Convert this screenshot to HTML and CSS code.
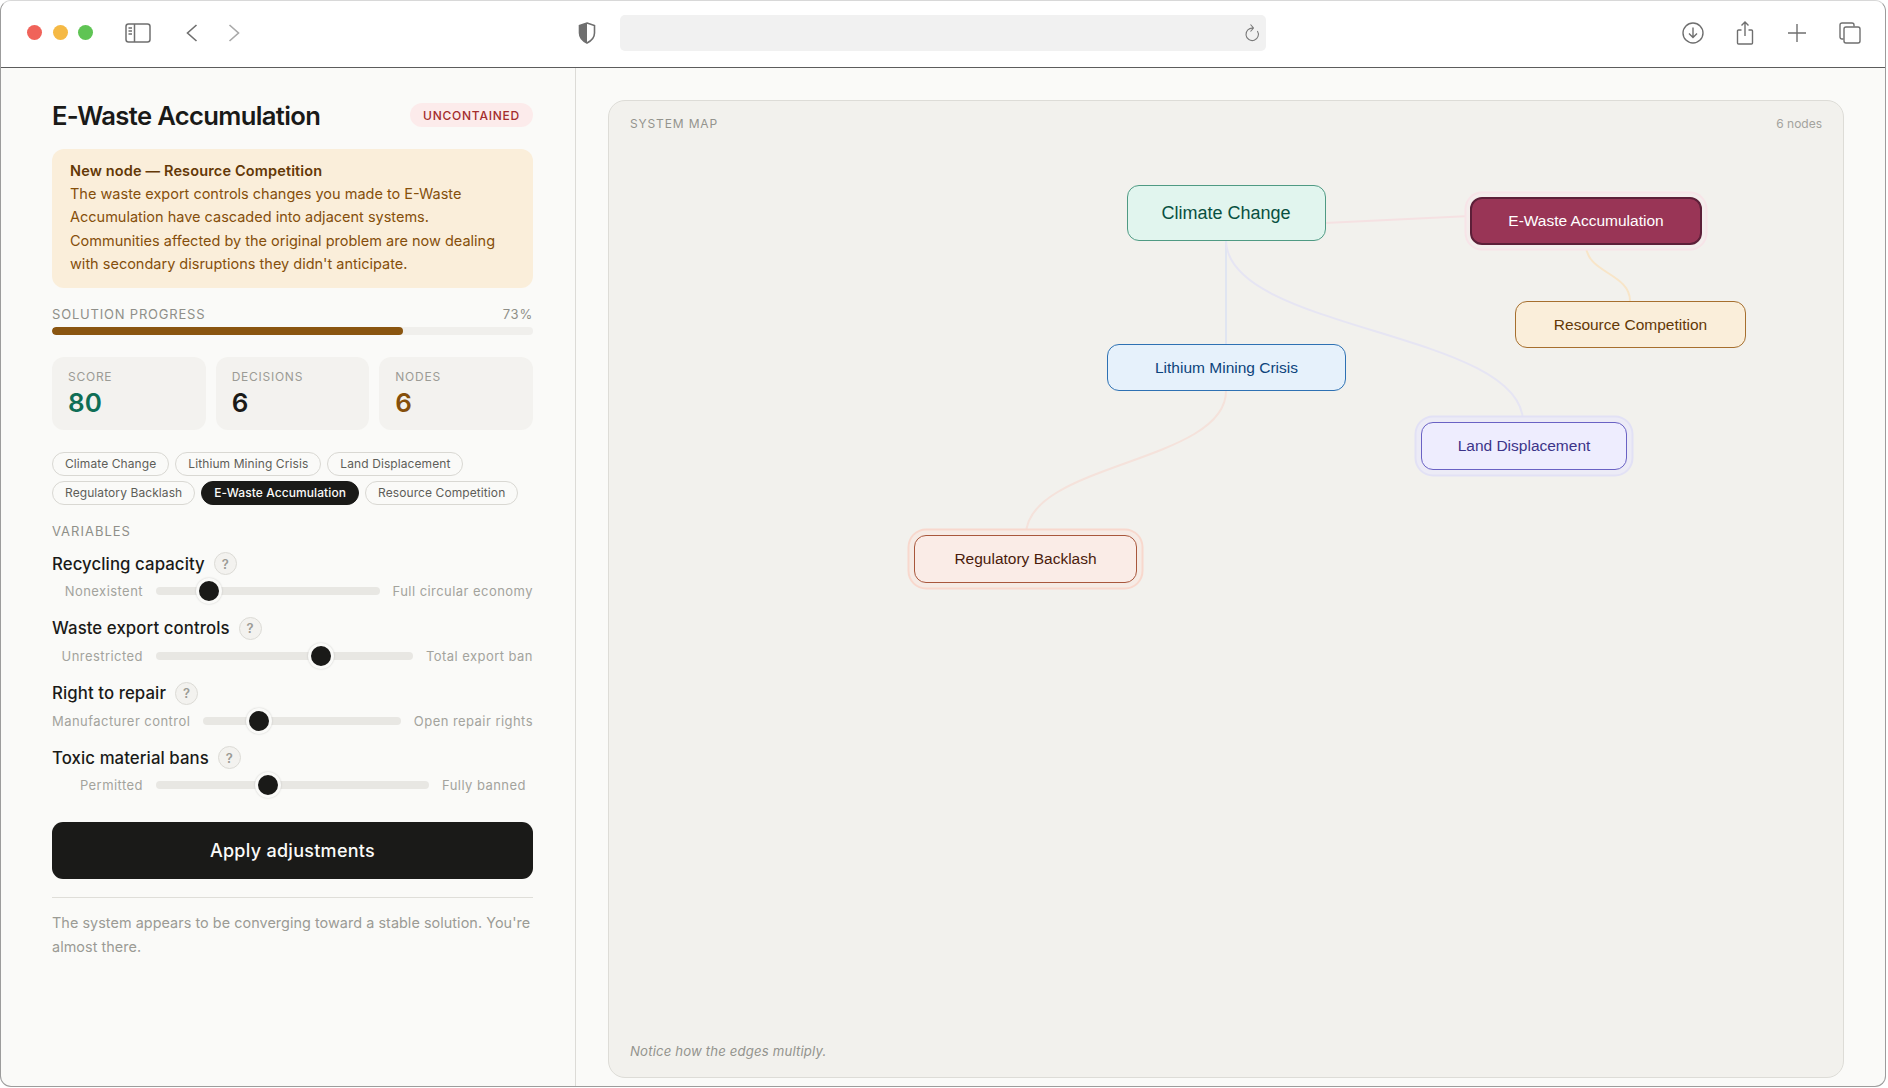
FILE: index.html
```html
<!DOCTYPE html>
<html lang="en">
<head>
<meta charset="utf-8">
<title>E-Waste Accumulation</title>
<link rel="stylesheet" href="styles.css">
</head>
<body>
<div class="window">
  <header class="toolbar">
    <div class="lights"><span class="light red"></span><span class="light yellow"></span><span class="light green"></span></div>
    <svg class="ic ic-sidebar" viewBox="0 0 26 20"><rect x="1" y="1" width="24" height="18" rx="2.5"/><path d="M9.5 1v18M3.5 5h3.5M3.5 8h3.5M3.5 11h3.5"/></svg>
    <svg class="ic ic-back" viewBox="0 0 12 18"><path d="M10.5 1 1.5 9l9 8"/></svg>
    <svg class="ic ic-forward" viewBox="0 0 12 18"><path d="M1.5 1l9 8-9 8"/></svg>
    <svg class="ic ic-shield" viewBox="0 0 18 22"><path class="half" d="M9 1 1.5 3.5V11c0 5 3.5 8 7.500 10Z"/><path d="M9 1l7.500 2.500V11c0 5-3.500 8-7.500 10-4-2-7.500-5-7.500-10V3.500Z"/></svg>
    <div class="urlbar">
      <svg class="ic ic-reload" viewBox="0 0 16 20"><path d="M9 5.200A6.200 6.200 0 1 0 13.400 8M6.500 1.500 9.500 5 6.500 8.500"/></svg>
    </div>
    <div class="tools">
      <svg class="ic ic-download" viewBox="0 0 22 22"><circle cx="11" cy="11" r="10"/><path d="M11 5.500v10M7 11.500l4 4 4-4"/></svg>
      <svg class="ic ic-share" viewBox="0 0 18 24"><path d="M5.500 9H2.500a1 1 0 0 0-1 1v12a1 1 0 0 0 1 1h13a1 1 0 0 0 1-1V10a1 1 0 0 0-1-1h-3M9 15V1M5.500 4.500 9 1l3.500 3.500"/></svg>
      <svg class="ic ic-plus" viewBox="0 0 18 18"><path d="M9 0v18M0 9h18"/></svg>
      <svg class="ic ic-tabs" viewBox="0 0 22 22"><path d="M4.500 17H3a2 2 0 0 1-2-2V3a2 2 0 0 1 2-2h10a2 2 0 0 1 2 2v1.500"/><rect x="5" y="5" width="16" height="16" rx="2"/></svg>
    </div>
  </header>

  <main class="main">
    <aside class="sidebar">
      <div class="title-row">
        <h1 class="title">E-Waste Accumulation</h1>
        <span class="badge">UNCONTAINED</span>
      </div>

      <section class="notice">
        <strong class="notice-title">New node — Resource Competition</strong>
        <p class="notice-body">The waste export controls changes you made to E-Waste Accumulation have cascaded into adjacent systems. Communities affected by the original problem are now dealing with secondary disruptions they didn't anticipate.</p>
      </section>

      <div class="progress-head"><span>SOLUTION PROGRESS</span><span>73%</span></div>
      <div class="progress-track"><div class="progress-fill" style="width:73%"></div></div>

      <div class="stats">
        <div class="stat"><div class="stat-label">SCORE</div><div class="stat-value teal">80</div></div>
        <div class="stat"><div class="stat-label">DECISIONS</div><div class="stat-value">6</div></div>
        <div class="stat"><div class="stat-label">NODES</div><div class="stat-value amber">6</div></div>
      </div>

      <div class="chips">
        <span class="chip">Climate Change</span>
        <span class="chip">Lithium Mining Crisis</span>
        <span class="chip">Land Displacement</span>
        <span class="chip">Regulatory Backlash</span>
        <span class="chip active">E-Waste Accumulation</span>
        <span class="chip">Resource Competition</span>
      </div>

      <div class="section-label">VARIABLES</div>

      <div class="variable">
        <div class="var-head"><span class="var-name">Recycling capacity</span><span class="help">?</span></div>
        <div class="var-row"><span class="lo">Nonexistent</span><input type="range" min="0" max="100" value="20"><span class="hi">Full circular economy</span></div>
      </div>
      <div class="variable">
        <div class="var-head"><span class="var-name">Waste export controls</span><span class="help">?</span></div>
        <div class="var-row"><span class="lo">Unrestricted</span><input type="range" min="0" max="100" value="66"><span class="hi">Total export ban</span></div>
      </div>
      <div class="variable">
        <div class="var-head"><span class="var-name">Right to repair</span><span class="help">?</span></div>
        <div class="var-row"><span class="lo">Manufacturer control</span><input type="range" min="0" max="100" value="25"><span class="hi">Open repair rights</span></div>
      </div>
      <div class="variable">
        <div class="var-head"><span class="var-name">Toxic material bans</span><span class="help">?</span></div>
        <div class="var-row"><span class="lo">Permitted</span><input type="range" min="0" max="100" value="40"><span class="hi">Fully banned</span></div>
      </div>

      <button class="apply" type="button">Apply adjustments</button>
      <p class="footnote">The system appears to be converging toward a stable solution. You're almost there.</p>
    </aside>

    <section class="pane">
      <div class="map">
        <span class="map-title">SYSTEM MAP</span>
        <span class="map-count">6 nodes</span>
        <svg class="edges" viewBox="0 0 1236 977">
          <path class="e-pink" d="M717 123C770 120 820 118 862 116"/>
          <path class="e-blue" d="M618 140V244"/>
          <path class="e-purple" d="M618 140C618 231 915 231 915 322"/>
          <path class="e-amber" d="M978 145C978 173 1022 173 1022 201"/>
          <path class="e-coral" d="M618 291C618 363 418 363 418 435"/>
        </svg>
        <div class="node n-climate">Climate Change</div>
        <div class="node n-ewaste">E-Waste Accumulation</div>
        <div class="node n-resource">Resource Competition</div>
        <div class="node n-lithium">Lithium Mining Crisis</div>
        <div class="node n-land">Land Displacement</div>
        <div class="node n-reg">Regulatory Backlash</div>
        <em class="map-note">Notice how the edges multiply.</em>
      </div>
    </section>
  </main>
</div>
</body>
</html>
```

FILE: styles.css
```css
* { box-sizing: border-box; }
html, body { margin: 0; padding: 0; background: #fff; }
body { font-family: Inter, "Liberation Sans", sans-serif; color: #1a1a18; }

.window {
  width: 1886px;
  height: 1087px;
  border: 1px solid #9c9c9c;
  border-top-color: #d8d8d8;
  border-radius: 11px;
  overflow: hidden;
  display: flex;
  flex-direction: column;
  background: #fafaf8;
}

.toolbar {
  height: 67px;
  flex: none;
  background: #fff;
  border-bottom: 1.5px solid #5c5c5c;
  display: flex;
  align-items: center;
  padding: 0 24px 3px 26px;
}
.lights { display: flex; gap: 10.500px; }
.light { width: 15px; height: 15px; border-radius: 50%; }
.red { background: #f0635a; }
.yellow { background: #f5b945; }
.green { background: #5fc454; }

.ic { fill: none; stroke: #6f6f6f; stroke-width: 1.6; flex: none; display: block; }
.ic-sidebar { width: 26px; height: 20px; margin-left: 32px; stroke-width: 1.5; }
.ic-back { width: 12px; height: 18px; margin-left: 35px; }
.ic-forward { width: 12px; height: 18px; margin-left: 29.500px; stroke: #a9a9a9; }
.ic-shield { width: 18px; height: 22px; margin-left: 338.500px; }
.ic-shield .half { fill: #6f6f6f; stroke: none; }
.urlbar {
  width: 646px;
  height: 36px;
  margin-left: 24px;
  background: #f1f1f1;
  border-radius: 5px;
  display: flex;
  align-items: center;
  justify-content: flex-end;
  padding-right: 6px;
}
.ic-reload { width: 16px; height: 20px; stroke-width: 1.1; stroke: #7a7a7a; }
.tools { margin-left: auto; display: flex; align-items: center; }
.ic-download { width: 22px; height: 22px; stroke-width: 1.4; }
.ic-share { width: 18px; height: 24px; margin-left: 32px; stroke-width: 1.4; }
.ic-plus { width: 18px; height: 18px; margin-left: 34px; stroke-width: 1.4; }
.ic-tabs { width: 22px; height: 22px; margin-left: 33px; stroke-width: 1.4; }

.main { flex: 1; display: flex; min-height: 0; }

.sidebar {
  width: 575px;
  flex: none;
  border-right: 1px solid #dcdbd7;
  padding: 35px 42px 0 51px;
}
.title-row { display: flex; align-items: center; justify-content: space-between; height: 26px; }
.title { margin: 0; font-size: 25.600px; font-weight: 600; letter-spacing: -0.65px; line-height: 26px; }
.badge {
  align-self: flex-start;
  height: 24px;
  width: 123px;
  border-radius: 12px;
  background: #fcebeb;
  color: #a32d2d;
  font-size: 12px;
  font-weight: 500;
  letter-spacing: 0.75px;
  display: flex;
  align-items: center;
  justify-content: center;
}

.notice {
  margin-top: 20px;
  height: 139px;
  background: #faeeda;
  border-radius: 12px;
  padding: 10px 18px;
  color: #854f0b;
  font-size: 14.500px;
  line-height: 23.200px;
}
.notice-title { display: block; color: #633806; font-weight: 600; letter-spacing: 0.15px; }
.notice-body { margin: 0; }

.progress-head {
  margin-top: 16px;
  display: flex;
  justify-content: space-between;
  font-size: 13px;
  line-height: 20px;
  letter-spacing: 0.8px;
  color: #8f8f89;
}
.progress-track { margin-top: 3px; height: 8px; border-radius: 4px; background: #f0efec; overflow: hidden; }
.progress-fill { height: 100%; border-radius: 4px; background: #8a5510; }

.stats { margin-top: 22px; display: grid; grid-template-columns: repeat(3, 1fr); gap: 10px; }
.stat { height: 73px; background: #f3f2ef; border-radius: 12px; padding: 12px 16px; }
.stat-label { font-size: 12px; line-height: 16px; letter-spacing: 0.75px; color: #9b9b95; }
.stat-value { font-size: 26px; font-weight: 600; line-height: 30px; margin-top: 3px; }
.teal { color: #0f6e56; }
.amber { color: #854f0b; }

.chips { margin-top: 22px; display: flex; flex-wrap: wrap; gap: 5px 6px; }
.chip {
  height: 24px;
  padding: 0 12px;
  border: 1px solid #d9d8d3;
  border-radius: 12px;
  font-size: 12px;
  letter-spacing: 0.09px;
  line-height: 22px;
  color: #5e5e59;
}
.chip.active { background: #1a1a18; border-color: #1a1a18; color: #fafaf8; font-weight: 500; }

.section-label {
  margin-top: 17px;
  font-size: 13px;
  line-height: 18px;
  letter-spacing: 1px;
  color: #8f8f89;
}

.variable { margin-top: 5px; height: 59.800px; }
.section-label + .variable { margin-top: 11.500px; }
.var-head { display: flex; align-items: center; gap: 9px; height: 24px; }
.var-name { font-size: 16.800px; font-weight: 500; letter-spacing: 0.08px; }
.help {
  flex: none;
  width: 23px;
  height: 23px;
  border-radius: 50%;
  border: 1px solid #dcdbd6;
  background: #f3f2ef;
  color: #9b9b95;
  font-size: 13px;
  font-weight: 600;
  display: flex;
  align-items: center;
  justify-content: center;
}
.var-row { display: flex; align-items: center; gap: 13px; height: 30px; margin-top: 0.500px; }
.lo, .hi { min-width: 91px; font-size: 13px; letter-spacing: 0.45px; color: #a3a39d; white-space: nowrap; flex: none; }
.lo { text-align: right; }

input[type="range"] {
  -webkit-appearance: none;
  appearance: none;
  flex: 1;
  min-width: 0;
  margin: 0;
  height: 26px;
  background: transparent;
}
input[type="range"]::-webkit-slider-runnable-track {
  height: 8px;
  border-radius: 4px;
  background: #e8e7e3;
}
input[type="range"]::-webkit-slider-thumb {
  -webkit-appearance: none;
  width: 26px;
  height: 26px;
  margin-top: -9px;
  border-radius: 50%;
  background: #1a1a18;
  border: 3.600px solid #fafaf8;
  box-shadow: 0 0 2px rgba(0,0,0,.18);
}

.apply {
  display: block;
  width: 100%;
  height: 57px;
  margin-top: 16px;
  border: 0;
  border-radius: 11px;
  background: #1a1a18;
  color: #fafaf8;
  font-family: inherit;
  font-size: 18px;
  font-weight: 500;
  letter-spacing: 0.28px;
}
.footnote {
  margin: 18.500px 0 0;
  padding-top: 13px;
  border-top: 1px solid #dfded9;
  font-size: 14.400px;
  line-height: 24px;
  letter-spacing: 0.05px;
  color: #9b9b95;
}

.pane { flex: 1; min-width: 0; padding: 32px 41px 8px 32px; }
.map {
  position: relative;
  height: 100%;
  background: #f2f1ed;
  border: 1px solid #dddcd7;
  border-radius: 17px;
  overflow: hidden;
}
.map-title { position: absolute; left: 21px; top: 15px; font-size: 12px; letter-spacing: 0.85px; color: #94948e; }
.map-count { position: absolute; right: 21px; top: 15px; font-size: 12px; color: #a3a39d; }
.map-note { position: absolute; left: 21px; bottom: 18px; font-size: 13.200px; color: #94948e; letter-spacing: 0.15px; }

.edges { position: absolute; left: -1px; top: -1px; width: 1236px; height: 977px; fill: none; stroke-width: 2; }
.e-pink { stroke: #f5e1e2; }
.e-blue { stroke: #e0e5f1; }
.e-purple { stroke: #e6e5f3; }
.e-amber { stroke: #f8e5c8; }
.e-coral { stroke: #f5e2db; }

.node {
  position: absolute;
  display: flex;
  align-items: center;
  justify-content: center;
  border-radius: 12px;
  border: 1.500px solid;
  font-family: "Liberation Sans", Arial, sans-serif;
  font-size: 15.500px;
}
.n-climate { left: 517.500px; top: 84px; width: 199px; height: 56px; padding-top: 1px; background: #e1f5ee; border-color: #4f9a83; color: #085041; font-size: 18px; }
.n-ewaste { left: 861px; top: 96px; width: 232px; height: 48px; background: #993556; border: 2px solid #5c1f38; color: #fff; box-shadow: 0 0 0 3.500px #f4edec, 0 0 0 5.500px #f7e4e8; }
.n-resource { left: 906px; top: 200px; width: 231px; height: 47px; background: #faeeda; border-color: #a66f2e; color: #633806; }
.n-lithium { left: 498px; top: 243px; width: 239px; height: 47px; background: #e6f1fb; border-color: #2e71b3; color: #0c447c; }
.n-land { left: 812px; top: 321px; width: 206px; height: 48px; background: #eeedfe; border: 1.800px solid #6a62c4; color: #3c3489; box-shadow: 0 0 0 4.500px #ecebf6, 0 0 0 6.500px #e2e1f5; }
.n-reg { left: 305px; top: 434px; width: 223px; height: 48px; background: #faece7; border: 1.800px solid #a8573c; color: #4a1b0c; box-shadow: 0 0 0 4.500px #f6ebe5, 0 0 0 6.500px #f8d8cd; }
```
